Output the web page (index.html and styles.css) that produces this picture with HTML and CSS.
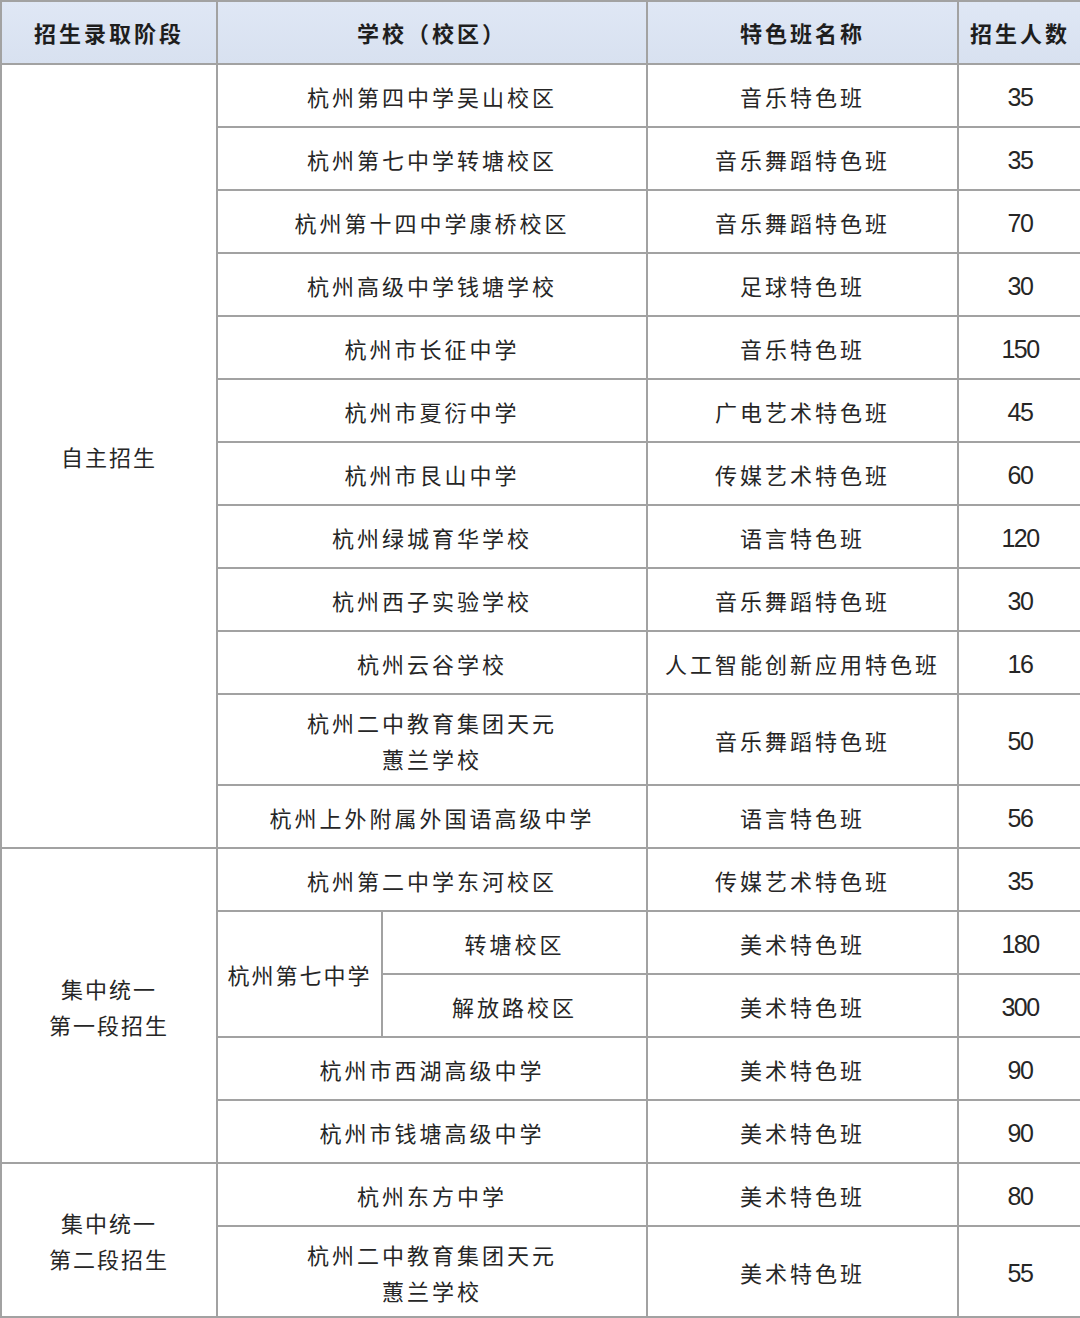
FILE: index.html
```html
<!DOCTYPE html>
<html lang="zh-CN">
<head>
<meta charset="utf-8">
<title>特色班招生</title>
<link rel="stylesheet" href="styles.css">
</head>
<body>
<table class="tbl">
  <colgroup>
    <col class="c-stage">
    <col class="c-school-a">
    <col class="c-school-b">
    <col class="c-class">
    <col class="c-num">
  </colgroup>
  <thead>
    <tr class="head">
      <th>招生录取阶段</th>
      <th colspan="2">学校（校区）</th>
      <th>特色班名称</th>
      <th>招生人数</th>
    </tr>
  </thead>
  <tbody>
    <tr><td rowspan="12" class="stage">自主招生</td><td colspan="2">杭州第四中学吴山校区</td><td>音乐特色班</td><td class="num">35</td></tr>
    <tr><td colspan="2">杭州第七中学转塘校区</td><td>音乐舞蹈特色班</td><td class="num">35</td></tr>
    <tr><td colspan="2">杭州第十四中学康桥校区</td><td>音乐舞蹈特色班</td><td class="num">70</td></tr>
    <tr><td colspan="2">杭州高级中学钱塘学校</td><td>足球特色班</td><td class="num">30</td></tr>
    <tr><td colspan="2">杭州市长征中学</td><td>音乐特色班</td><td class="num">150</td></tr>
    <tr><td colspan="2">杭州市夏衍中学</td><td>广电艺术特色班</td><td class="num">45</td></tr>
    <tr><td colspan="2">杭州市艮山中学</td><td>传媒艺术特色班</td><td class="num">60</td></tr>
    <tr><td colspan="2">杭州绿城育华学校</td><td>语言特色班</td><td class="num">120</td></tr>
    <tr><td colspan="2">杭州西子实验学校</td><td>音乐舞蹈特色班</td><td class="num">30</td></tr>
    <tr><td colspan="2">杭州云谷学校</td><td>人工智能创新应用特色班</td><td class="num">16</td></tr>
    <tr class="tall"><td colspan="2">杭州二中教育集团天元<br>蕙兰学校</td><td>音乐舞蹈特色班</td><td class="num">50</td></tr>
    <tr><td colspan="2">杭州上外附属外国语高级中学</td><td>语言特色班</td><td class="num">56</td></tr>
    <tr><td rowspan="5" class="stage">集中统一<br>第一段招生</td><td colspan="2">杭州第二中学东河校区</td><td>传媒艺术特色班</td><td class="num">35</td></tr>
    <tr><td rowspan="2" class="sub">杭州第七中学</td><td>转塘校区</td><td>美术特色班</td><td class="num">180</td></tr>
    <tr><td>解放路校区</td><td>美术特色班</td><td class="num">300</td></tr>
    <tr><td colspan="2">杭州市西湖高级中学</td><td>美术特色班</td><td class="num">90</td></tr>
    <tr><td colspan="2">杭州市钱塘高级中学</td><td>美术特色班</td><td class="num">90</td></tr>
    <tr><td rowspan="2" class="stage">集中统一<br>第二段招生</td><td colspan="2">杭州东方中学</td><td>美术特色班</td><td class="num">80</td></tr>
    <tr class="tall last"><td colspan="2">杭州二中教育集团天元<br>蕙兰学校</td><td>美术特色班</td><td class="num">55</td></tr>
  </tbody>
</table>
</body>
</html>
```

FILE: styles.css
```css
html, body {
  margin: 0;
  padding: 0;
  background: #ffffff;
}

.tbl {
  width: 1080px;
  border-collapse: collapse;
  table-layout: fixed;
  font-family: "Noto Sans CJK SC", "Noto Sans", sans-serif;
  color: #262626;
}

.c-stage { width: 216px; }
.c-school-a { width: 165px; }
.c-school-b { width: 265px; }
.c-class { width: 311px; }
.c-num { width: 123px; }

.tbl th,
.tbl td {
  border: 2px solid #a2a2a2;
  text-align: center;
  vertical-align: middle;
  padding: 0;
  font-size: 22px;
  letter-spacing: 3px;
  line-height: 36px;
  height: 61px;
}

.tbl tr > :last-child {
  border-right: none;
}

.tbl .head th {
  background: linear-gradient(#dfe7f5, #d8e1f0);
  font-weight: 600;
  color: #1e1e1e;
  height: 59px;
  padding-bottom: 2px;
}

.tbl .tall td {
  height: 89px;
}

.tbl .stage,
.tbl .sub {
  letter-spacing: 2px;
}

.tbl td.num {
  font-family: "Liberation Sans", Arial, sans-serif;
  font-size: 25px;
  letter-spacing: -1.5px;
  padding-top: 3px;
  height: 58px;
}

.tbl .tall td.num {
  height: 86px;
}
```
